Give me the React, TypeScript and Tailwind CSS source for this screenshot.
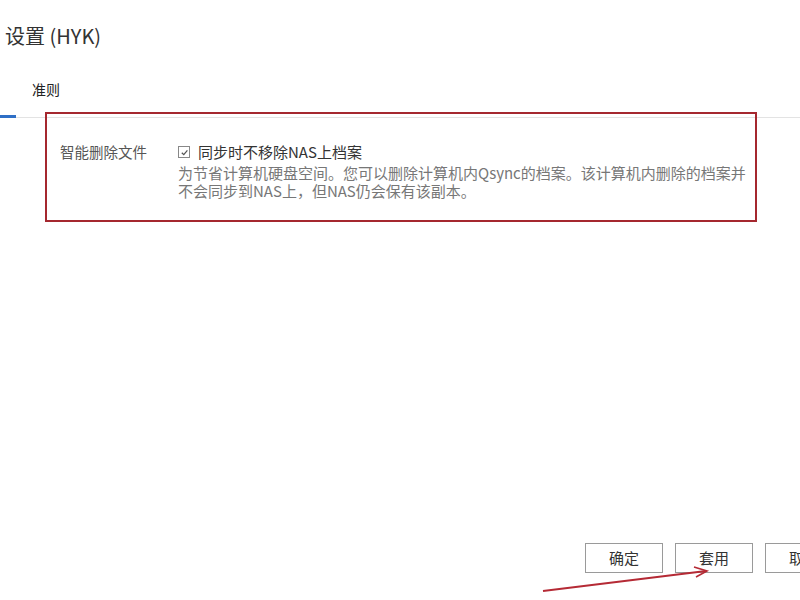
import React from 'react';

const font = { fontFamily: '"Noto Sans CJK SC", "Microsoft YaHei", "Liberation Sans", sans-serif' };

export default function App() {
  return (
    <div className="relative h-[600px] w-[800px] overflow-hidden bg-white flex flex-col" style={font}>
      {/* title */}
      <div className="pl-[5px] pt-[22px] h-[72px] text-[20px] leading-[28px] text-[#333]">设置 (HYK)</div>

      {/* tabs */}
      <div className="flex items-end h-[46px] border-b border-[#e3e3e3]">
        <div className="w-[16px] h-full border-b-[3px] border-[#2f6fc6] -mb-[1px]" />
        <div className="pl-[16px] pb-[18px] text-[14px] leading-[20px] text-[#222]">准则</div>
      </div>

      {/* content */}
      <div className="flex pt-[24px] pl-[60px]">
        <div className="w-[118px] text-[14.5px] leading-[20px] text-[#555]">智能删除文件</div>
        <div className="flex flex-col">
          <div className="flex items-center gap-[8px]">
            <span className="w-[12px] h-[12px] border border-[#888] flex items-center justify-center">
              <svg width="9" height="9" viewBox="0 0 10 10" fill="none" stroke="#555" strokeWidth="1.4">
                <path d="M2 5.2 L4.2 7.4 L8.2 2.6" />
              </svg>
            </span>
            <span className="text-[15px] leading-[20px] text-[#333]">同步时不移除NAS上档案</span>
          </div>
          <div className="mt-[2px] text-[15px] leading-[18px] text-[#777] whitespace-nowrap">
            为节省计算机硬盘空间。您可以删除计算机内Qsync的档案。该计算机内删除的档案并
            <br />
            不会同步到NAS上，但NAS仍会保有该副本。
          </div>
        </div>
      </div>

      <div className="flex-1" />

      {/* buttons */}
      <div className="flex justify-end gap-[12px] pb-[27px] -mr-[43px]">
        <button className="w-[78px] h-[30px] border border-[#9a9a9a] bg-white text-[15px] text-[#333]">确定</button>
        <button className="w-[78px] h-[30px] border border-[#9a9a9a] bg-white text-[15px] text-[#333]">套用</button>
        <button className="w-[78px] h-[30px] border border-[#9a9a9a] bg-white text-[15px] text-[#333] text-left pl-[23px]">取消</button>
      </div>

      {/* annotation box */}
      <div className="absolute left-[45px] top-[112px] w-[712px] h-[110px] border-2 border-[#a5282f] pointer-events-none" />

      {/* annotation arrow */}
      <svg className="absolute left-0 top-0 pointer-events-none" width="800" height="600">
        <path d="M543 591 L706 571" stroke="#b52a35" strokeWidth="2" fill="none" />
        <path d="M694 567 L707 571 L696 577" stroke="#b52a35" strokeWidth="1.6" fill="none" />
      </svg>
    </div>
  );
}
